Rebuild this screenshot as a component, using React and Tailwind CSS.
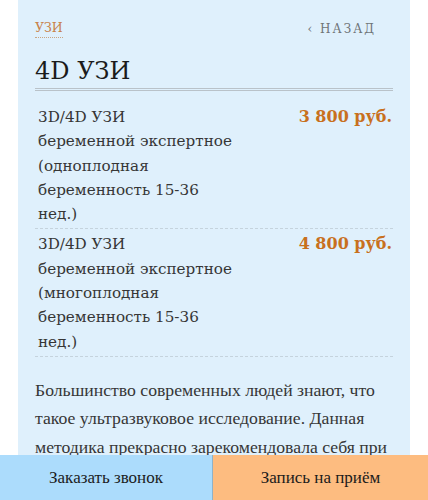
import React from "react";

const services = [
  {
    lines: ["3D/4D УЗИ", "беременной экспертное", "(одноплодная", "беременность 15-36", "нед.)"],
    price: "3 800 руб.",
  },
  {
    lines: ["3D/4D УЗИ", "беременной экспертное", "(многоплодная", "беременность 15-36", "нед.)"],
    price: "4 800 руб.",
  },
];

export default function App() {
  return (
    <div className="flex h-[500px] w-[428px] flex-col overflow-hidden bg-white">
      <div className="mx-[18px] min-h-0 flex-1 overflow-hidden bg-[#dff0fc] px-[17px] pt-[20px] font-['DejaVu_Serif',serif]">
        {/* breadcrumbs */}
        <div className="flex items-center justify-between">
          <span className="border-b border-dotted border-[#c9a583] pb-[1px] text-[12.5px] leading-[16px] text-[#c8824a]">
            УЗИ
          </span>
          <span className="mr-[17px] text-[12px] leading-[16px] tracking-[2px] text-[#6f7478]">
            ‹ НАЗАД
          </span>
        </div>

        {/* title */}
        <h1 className="mt-[18px] border-b-[3px] border-double border-[#b9c2c9] pb-[2px] text-[24px] leading-[30px] text-[#1b1b1b]">
          4D УЗИ
        </h1>

        {/* prices */}
        <div className="mt-[11px]">
          {services.map((s) => (
            <div
              key={s.price}
              className="flex justify-between border-b border-dashed border-[#c5d3dd] pt-[3px] pb-[2px] pl-[3px] pr-[1px]"
            >
              <div className="text-[15.2px] leading-[24.3px] text-[#363636]">
                {s.lines.map((l) => (
                  <div key={l}>{l}</div>
                ))}
              </div>
              <div className="text-[16px] font-bold leading-[24px] text-[#c8701e]">
                {s.price}
              </div>
            </div>
          ))}
        </div>

        <p className="mt-[19px] font-['Liberation_Serif',serif] text-[17.7px] leading-[28.5px] text-[#363636]">
          Большинство современных людей знают, что такое ультразвуковое
          исследование. Данная методика прекрасно зарекомендовала себя при
        </p>
      </div>

      {/* bottom buttons */}
      <div className="flex h-[45px] shrink-0 font-['Liberation_Serif',serif] text-[17px] text-[#1b1b1b]">
        <div className="flex w-[213px] items-center justify-center border-r border-[#8fb3c9] bg-[#acdcfc]">
          Заказать звонок
        </div>
        <div className="flex flex-1 items-center justify-center bg-[#fdbc80]">
          Запись на приём
        </div>
      </div>
    </div>
  );
}
